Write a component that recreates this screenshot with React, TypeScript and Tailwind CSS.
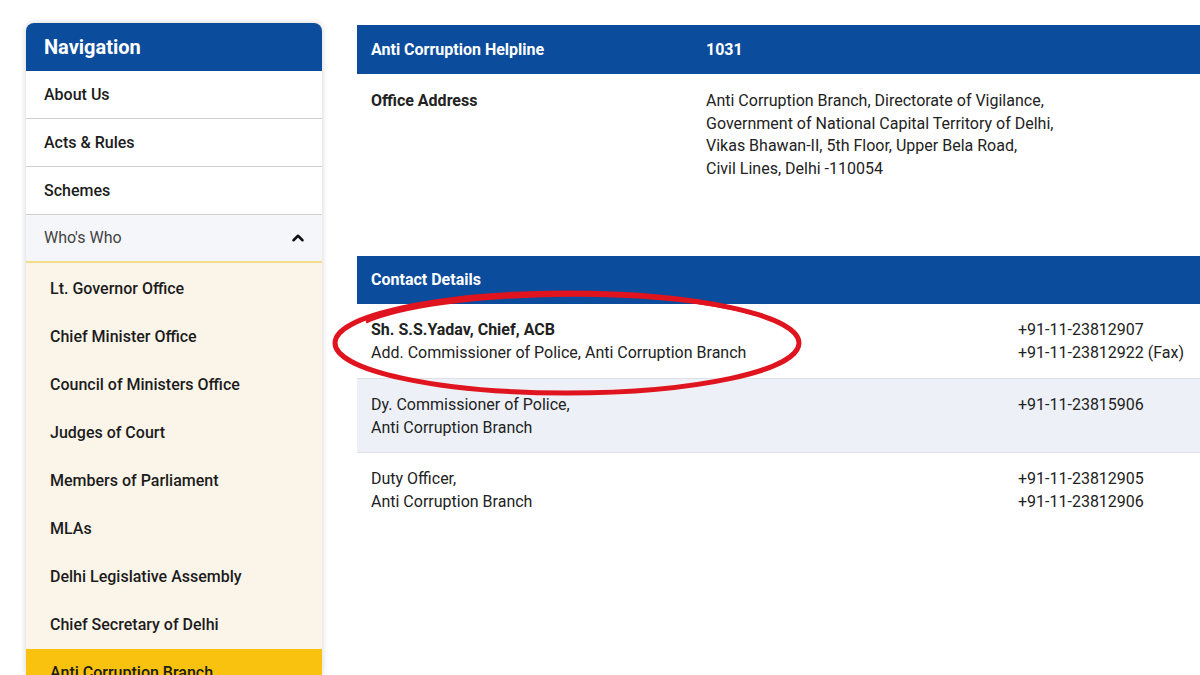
import React from 'react';
import { ChevronUp } from 'lucide-react';

const topItems = ['About Us', 'Acts & Rules', 'Schemes'];

const subItems = [
  'Lt. Governor Office',
  'Chief Minister Office',
  'Council of Ministers Office',
  'Judges of Court',
  'Members of Parliament',
  'MLAs',
  'Delhi Legislative Assembly',
  'Chief Secretary of Delhi',
  'Anti Corruption Branch',
];

const contacts = [
  {
    lines: ['Sh. S.S.Yadav, Chief, ACB', 'Add. Commissioner of Police, Anti Corruption Branch'],
    bold: true,
    phones: ['+91-11-23812907', '+91-11-23812922 (Fax)'],
  },
  {
    lines: ['Dy. Commissioner of Police,', 'Anti Corruption Branch'],
    phones: ['+91-11-23815906'],
    shaded: true,
  },
  {
    lines: ['Duty Officer,', 'Anti Corruption Branch'],
    phones: ['+91-11-23812905', '+91-11-23812906'],
  },
];

function Sidebar() {
  return (
    <aside className="w-[296px] shrink-0 rounded-t-[8px] bg-white shadow-[0_0_6px_rgba(0,0,0,0.18)]">
      <div className="h-[48px] rounded-t-[8px] bg-[#0b4c9d] px-[18px] flex items-center">
        <h2 className="text-[20px] font-bold text-white">Navigation</h2>
      </div>
      {topItems.map((item) => (
        <div key={item} className="h-[48px] border-b border-[#cfcfcf] px-[18px] flex items-center text-[16px] font-medium text-[#1c1c1c]">
          {item}
        </div>
      ))}
      <div className="h-[48px] bg-[#f4f6f9] border-b-2 border-[#f3dc8a] pl-[18px] pr-[15px] flex items-center justify-between text-[16px] text-[#444]">
        <span>Who's Who</span>
        <ChevronUp size={18} strokeWidth={3.4} className="text-[#111]" />
      </div>
      <ul className="bg-[#fbf5e9] pt-[2px]">
        {subItems.map((item) => (
          <li
            key={item}
            className={
              item === 'Anti Corruption Branch'
                ? 'h-[48px] px-[24px] flex items-center text-[16px] font-medium text-[#1c1c1c] bg-[#f8c20f]'
                : 'h-[48px] px-[24px] flex items-center text-[16px] font-medium text-[#1c1c1c]'
            }
          >
            {item}
          </li>
        ))}
      </ul>
    </aside>
  );
}

function Content() {
  return (
    <section className="relative w-[870px] shrink-0 pt-[2px] text-[16px] text-[#222]">
      <div className="h-[49px] bg-[#0b4c9d] flex items-center text-white font-bold">
        <div className="w-[349px] pl-[14px]">Anti Corruption Helpline</div>
        <div>1031</div>
      </div>
      <div className="flex pt-[16px] leading-[22.5px]">
        <div className="w-[349px] pl-[14px] font-bold">Office Address</div>
        <div>
          <div>Anti Corruption Branch, Directorate of Vigilance,</div>
          <div>Government of National Capital Territory of Delhi,</div>
          <div>Vikas Bhawan-II, 5th Floor, Upper Bela Road,</div>
          <div>Civil Lines, Delhi -110054</div>
        </div>
      </div>

      <div className="mt-[76px] h-[48px] bg-[#0b4c9d] flex items-center pl-[14px] text-white font-bold">
        Contact Details
      </div>
      {contacts.map((c, i) => (
        <div
          key={i}
          className={
            (c.shaded ? 'bg-[#edf1f7] ' : 'bg-white ') +
            (i > 0 ? 'border-t border-[#dde2ea] ' : '') +
            'h-[74px] flex pt-[15px] leading-[22.5px]'
          }
        >
          <div className="w-[661px] pl-[14px]">
            {c.lines.map((l, j) => (
              <div key={l} className={c.bold && j === 0 ? 'font-bold' : ''}>
                {l}
              </div>
            ))}
          </div>
          <div>
            {c.phones.map((p) => (
              <div key={p}>{p}</div>
            ))}
          </div>
        </div>
      ))}

      <svg className="absolute left-[-27px] top-[265px] pointer-events-none" width="476" height="110" viewBox="0 0 476 110">
        <ellipse cx="237" cy="55" rx="232" ry="50" fill="none" stroke="#e0141f" strokeWidth="5" />
        <path d="M36 34 C110 2 330 -2 424 26" fill="none" stroke="#e0141f" strokeWidth="3" />
      </svg>
    </section>
  );
}

export default function App() {
  return (
    <div className="w-[1200px] h-[675px] overflow-hidden bg-white flex gap-[35px] pl-[26px] pt-[23px] font-['Roboto',sans-serif]">
      <Sidebar />
      <Content />
    </div>
  );
}
